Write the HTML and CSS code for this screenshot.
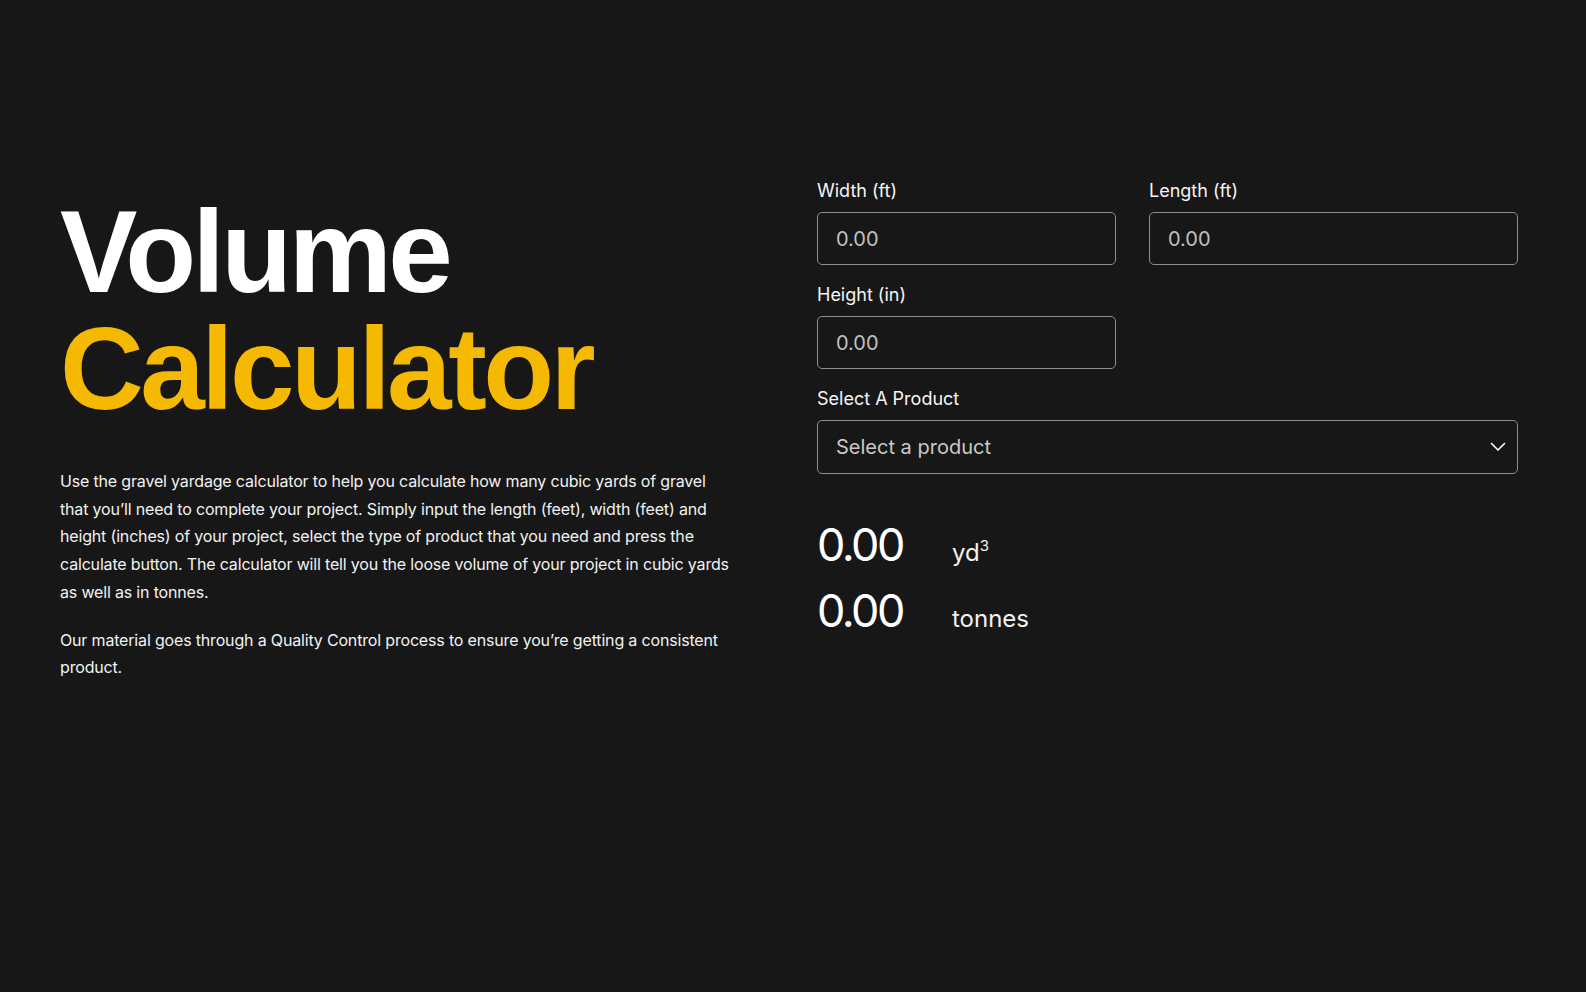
FILE: index.html
```html
<!DOCTYPE html>
<html lang="en">
<head>
<meta charset="utf-8">
<title>Volume Calculator</title>
<link rel="stylesheet" href="styles.css">
</head>
<body>
<main class="page">
  <section class="intro">
    <h1 class="title"><span class="title-white">Volume</span><span class="title-yellow">Calculator</span></h1>
    <p class="copy">Use the gravel yardage calculator to help you calculate how many cubic yards of gravel that you’ll need to complete your project. Simply input the length (feet), width (feet) and height (inches) of your project, select the type of product that you need and press the calculate button. The calculator will tell you the loose volume of your project in cubic yards as well as in tonnes.</p>
    <p class="copy">Our material goes through a Quality Control process to ensure you’re getting a consistent product.</p>
  </section>
  <section class="calc">
    <div class="row-two">
      <div class="field">
        <label class="label" for="w">Width (ft)</label>
        <input class="input" id="w" type="text" placeholder="0.00">
      </div>
      <div class="field">
        <label class="label" for="l">Length (ft)</label>
        <input class="input" id="l" type="text" placeholder="0.00">
      </div>
    </div>
    <div class="row-two">
      <div class="field">
        <label class="label" for="h">Height (in)</label>
        <input class="input" id="h" type="text" placeholder="0.00">
      </div>
    </div>
    <div class="field">
      <label class="label" for="p">Select A Product</label>
      <div class="select">
        <span class="select-text">Select a product</span>
        <svg class="chevron" width="16" height="10" viewBox="0 0 16 10" aria-hidden="true"><path d="M1.5 1.5 L8 8 L14.5 1.5" fill="none" stroke="#ffffff" stroke-width="1.6" stroke-linecap="round" stroke-linejoin="round"/></svg>
      </div>
    </div>
    <div class="results">
      <div class="result-row"><span class="num">0.00</span><span class="unit">yd<sup class="sup">3</sup></span></div>
      <div class="result-row"><span class="num">0.00</span><span class="unit">tonnes</span></div>
    </div>
  </section>
</main>
</body>
</html>
```
FILE: styles.css
```css
html, body {
  margin: 0;
  background: #171717;
}
body {
  font-family: Inter, "Noto Sans", sans-serif;
  color: #f5f5f5;
}
.page {
  display: grid;
  grid-template-columns: 677px 701px;
  column-gap: 80px;
  padding: 180px 0 0 60px;
  align-items: start;
}
.intro {
  padding-top: 14px;
}
.title {
  margin: 0;
  font-family: "Liberation Sans", Arial, sans-serif;
  font-weight: 700;
  font-size: 116px;
  line-height: 117px;
  letter-spacing: -3.5px;
}
.title-white {
  display: block;
  color: #ffffff;
}
.title-yellow {
  display: block;
  color: #f4b900;
}
.copy {
  margin: 40px 0 0;
  font-size: 16px;
  line-height: 27.7px;
  letter-spacing: -0.17px;
  color: #f2f2f2;
}
.copy + .copy {
  margin-top: 20px;
}
.calc {
  display: flex;
  flex-direction: column;
  gap: 19px;
}
.row-two {
  display: grid;
  grid-template-columns: 299px 369px;
  column-gap: 33px;
}
.field {
  display: flex;
  flex-direction: column;
}
.label {
  font-size: 18px;
  line-height: 22px;
  margin-bottom: 10px;
  color: #f5f5f5;
}
.input, .select {
  box-sizing: border-box;
  height: 53px;
  border: 1.5px solid #8e8e8e;
  border-radius: 5px;
  background: transparent;
  padding: 0 18px;
  font-family: Inter, "Noto Sans", sans-serif;
  font-size: 20px;
  color: #e0e0e0;
  outline: none;
  width: 100%;
}
.input::placeholder {
  color: #c0c0c0;
}
.select {
  height: 54px;
  display: flex;
  align-items: center;
  justify-content: space-between;
  padding-right: 11px;
}
.select-text {
  color: #c9c9c9;
}
.chevron {
  display: block;
}
.results {
  margin-top: 29px;
}
.result-row {
  display: flex;
  align-items: baseline;
  height: 66px;
}
.num {
  width: 135px;
  flex: none;
  font-size: 45px;
  line-height: 1;
  letter-spacing: -2.5px;
  font-weight: 400;
  color: #ffffff;
}
.unit {
  font-size: 24px;
  line-height: 1;
  color: #f2f2f2;
}
.sup {
  font-size: 15px;
  vertical-align: 10px;
  line-height: 0;
}
```
